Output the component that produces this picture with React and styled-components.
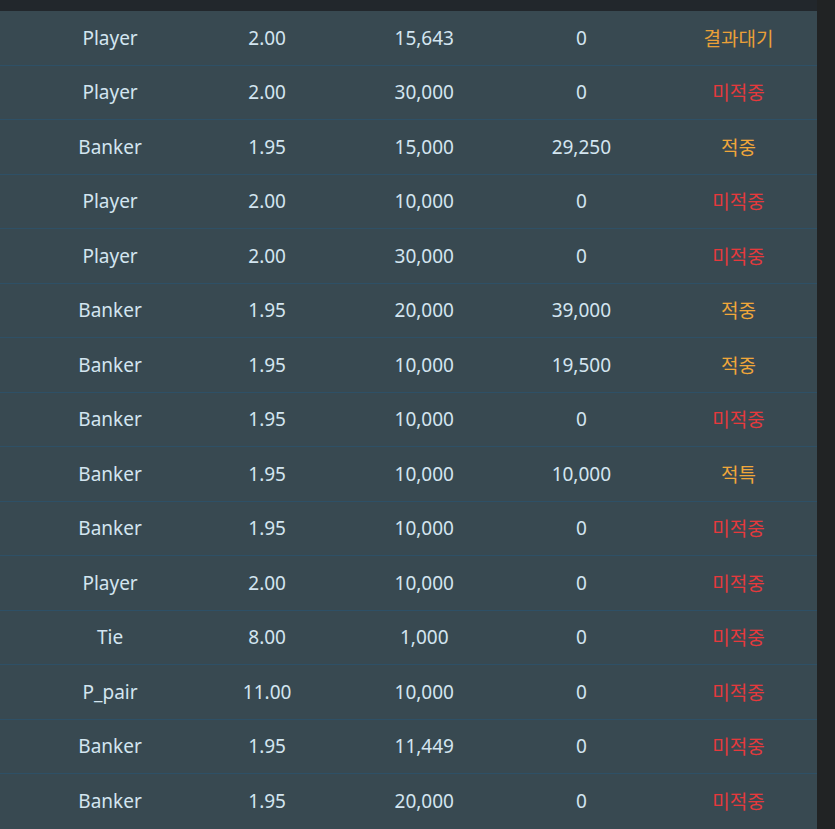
import React from "react";
import styled, { createGlobalStyle } from "styled-components";

const Global = createGlobalStyle`
  html, body { margin: 0; padding: 0; background: #212324; }
  body { font-family: "Noto Sans", "Noto Sans CJK KR", sans-serif; }
`;

const Page = styled.div`
  display: grid;
  grid-template-columns: 817px 1fr;
  height: 829px;
  overflow: hidden;
`;

const Main = styled.div`
  display: flex;
  flex-direction: column;
`;

const TopStrip = styled.div`
  height: 11px;
  background: #22272c;
  flex: none;
`;

const Table = styled.div`
  display: flex;
  flex-direction: column;
  background: #384951;
`;

const Row = styled.div`
  display: grid;
  grid-template-columns: 31.5px repeat(5, 1fr);
  align-items: center;
  height: 54.53px;
  box-sizing: border-box;
  border-bottom: 1px solid #2e5066;
  &:last-child { border-bottom: none; }
`;

const Cell = styled.div`
  text-align: center;
  font-size: 19px;
  line-height: 24px;
  color: ${(p) => p.$color || "#d3e5f0"};
  font-family: ${(p) => (p.$kr ? `"Noto Sans CJK KR", "Noto Sans", sans-serif` : `"Noto Sans", "Noto Sans CJK KR", sans-serif`)};
`;

const SideStrip = styled.div`
  background: #212324;
`;

const statusColor = {
  "결과대기": "#eaa038",
  "미적중": "#e5393c",
  "적중": "#f0a73a",
  "적특": "#f0a73a",
};

const rows = [
  ["Player", "2.00", "15,643", "0", "결과대기"],
  ["Player", "2.00", "30,000", "0", "미적중"],
  ["Banker", "1.95", "15,000", "29,250", "적중"],
  ["Player", "2.00", "10,000", "0", "미적중"],
  ["Player", "2.00", "30,000", "0", "미적중"],
  ["Banker", "1.95", "20,000", "39,000", "적중"],
  ["Banker", "1.95", "10,000", "19,500", "적중"],
  ["Banker", "1.95", "10,000", "0", "미적중"],
  ["Banker", "1.95", "10,000", "10,000", "적특"],
  ["Banker", "1.95", "10,000", "0", "미적중"],
  ["Player", "2.00", "10,000", "0", "미적중"],
  ["Tie", "8.00", "1,000", "0", "미적중"],
  ["P_pair", "11.00", "10,000", "0", "미적중"],
  ["Banker", "1.95", "11,449", "0", "미적중"],
  ["Banker", "1.95", "20,000", "0", "미적중"],
];

export default function App() {
  return (
    <>
      <Global />
      <Page>
        <Main>
          <TopStrip />
          <Table>
            {rows.map((r, i) => (
              <Row key={i}>
                <span />
                <Cell>{r[0]}</Cell>
                <Cell>{r[1]}</Cell>
                <Cell>{r[2]}</Cell>
                <Cell>{r[3]}</Cell>
                <Cell $kr $color={statusColor[r[4]]}>{r[4]}</Cell>
              </Row>
            ))}
          </Table>
        </Main>
        <SideStrip />
      </Page>
    </>
  );
}
